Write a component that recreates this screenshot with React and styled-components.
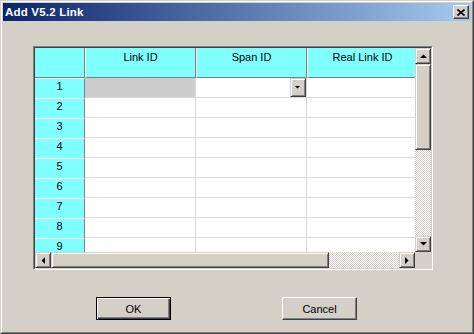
import styled, { createGlobalStyle } from 'styled-components';

const GlobalStyle = createGlobalStyle`
  html, body {
    margin: 0;
    padding: 0;
    background: #d4d0c8;
  }
  * {
    box-sizing: border-box;
  }
`;

const face = '#d4d0c8';
const shadow = '#808080';
const dark = '#404040';

const Window = styled.div`
  width: 474px;
  height: 334px;
  border: 1px solid;
  border-color: ${face} ${dark} ${dark} ${face};
  background: ${face};
  font-family: "Liberation Sans", "DejaVu Sans", sans-serif;
  font-size: 11px;
  color: #000;
`;

const Frame = styled.div`
  height: 100%;
  border: 1px solid;
  border-color: #fff ${shadow} ${shadow} #fff;
  padding: 1px;
  display: flex;
  flex-direction: column;
`;

const TitleBar = styled.div`
  height: 18px;
  display: flex;
  align-items: center;
  justify-content: space-between;
  padding: 0 2px 0 2px;
  background: linear-gradient(to right, #0a246a, #a6caf0);
`;

const Title = styled.span`
  color: #fff;
  font-weight: bold;
  font-size: 11.5px;
  letter-spacing: 0.2px;
`;

const CloseButton = styled.div`
  width: 16px;
  height: 14px;
  background: ${face};
  border: 1px solid;
  border-color: #fff ${dark} ${dark} #fff;
  box-shadow: inset -1px -1px ${shadow};
  display: flex;
  align-items: center;
  justify-content: center;
`;

const Body = styled.div`
  flex: 1;
  display: flex;
  flex-direction: column;
  padding: 25px 0 0 30px;
`;

const GridFrame = styled.div`
  width: 400px;
  height: 224px;
  border: 1px solid;
  border-color: ${shadow} #fff #fff ${shadow};
`;

const GridInner = styled.div`
  height: 100%;
  border: 1px solid;
  border-color: ${dark} ${face} ${face} ${dark};
  display: flex;
  flex-direction: column;
`;

const GridTop = styled.div`
  display: flex;
  height: 204px;
`;

const GridBottom = styled.div`
  display: flex;
  height: 16px;
`;

const Cells = styled.div`
  width: 380px;
  height: 204px;
  overflow: hidden;
  display: grid;
  grid-template-columns: 50px 111px 111px 111px;
  grid-template-rows: 30px;
  grid-auto-rows: 20px;
  background: #fff;
`;

const HeadCell = styled.div`
  background: #80ffff;
  border-left: ${(p) => (p.$corner ? 'none' : '1px solid #fff')};
  border-right: 1px solid ${shadow};
  border-bottom: 1px solid ${shadow};
  text-align: center;
  padding-top: 3px;
  white-space: nowrap;
`;

const RowHead = styled.div`
  background: #80ffff;
  border-top: 1px solid #fff;
  border-right: 1px solid ${shadow};
  text-align: center;
  line-height: 13px;
  padding-top: 1px;
`;

const DataCell = styled.div`
  background: ${(p) => (p.$selected ? '#cccccc' : '#fff')};
  border-right: 1px solid #dadada;
  border-bottom: 1px solid #dadada;
  display: flex;
  justify-content: flex-end;
`;

const Bevel = styled.div`
  background: ${face};
  border: 1px solid;
  border-color: ${face} ${dark} ${dark} ${face};
  box-shadow: inset 1px 1px #fff, inset -1px -1px ${shadow};
  display: flex;
  align-items: center;
  justify-content: center;
`;

const ScrollButton = styled(Bevel)`
  width: 16px;
  height: 16px;
  flex: none;
`;

const DropButton = styled(Bevel)`
  width: 16px;
  height: 19px;
`;

const Thumb = styled(Bevel)`
  flex: none;
  width: ${(p) => (p.$vertical ? '16px' : `${p.$size}px`)};
  height: ${(p) => (p.$vertical ? `${p.$size}px` : '16px')};
`;

const Track = styled.div`
  flex: 1;
  background: repeating-conic-gradient(${face} 0% 25%, #ffffff 0% 50%) 0 0 / 2px 2px;
`;

const VScroll = styled.div`
  width: 16px;
  display: flex;
  flex-direction: column;
`;

const HScroll = styled.div`
  width: 380px;
  display: flex;
`;

const Corner = styled.div`
  width: 16px;
  background: ${face};
`;

const ButtonRow = styled.div`
  display: flex;
  gap: 111px;
  margin: 27px 0 0 63px;
`;

const PushButton = styled.div`
  width: 75px;
  height: 23px;
  background: ${face};
  border: 1px solid;
  border-color: ${(p) => (p.$default ? '#000' : `#fff ${dark} ${dark} #fff`)};
  box-shadow: ${(p) =>
    p.$default
      ? `inset 1px 1px #fff, inset -1px -1px ${dark}, inset -2px -2px ${shadow}`
      : `inset -1px -1px ${shadow}`};
  display: flex;
  align-items: center;
  justify-content: center;
  padding-top: 1px;
`;

const arrows = {
  up: '0,4 7,4 3.5,0.5',
  down: '0,0 7,0 3.5,3.5',
  left: '4,0 4,7 0.5,3.5',
  right: '0,0 0,7 3.5,3.5',
};

const Arrow = ({ dir, small }) => {
  const horiz = dir === 'left' || dir === 'right';
  const w = horiz ? 4 : 7;
  const h = horiz ? 7 : 4;
  const s = small ? 0.72 : 1;
  return (
    <svg width={w * s} height={h * s} viewBox={`0 0 ${w} ${h}`} style={{ display: 'block' }}>
      <polygon points={arrows[dir]} fill="#000" />
    </svg>
  );
};

const CloseGlyph = () => (
  <svg width="8" height="7" viewBox="0 0 8 7" style={{ display: 'block' }}>
    <path d="M0.5 0.5 L7.5 6.5 M7.5 0.5 L0.5 6.5" stroke="#000" strokeWidth="1.6" />
  </svg>
);

const columns = ['Link ID', 'Span ID', 'Real Link ID'];
const rows = [1, 2, 3, 4, 5, 6, 7, 8, 9];

const App = () => {
  return (
    <>
      <GlobalStyle />
      <Window>
        <Frame>
          <TitleBar>
            <Title>Add V5.2 Link</Title>
            <CloseButton>
              <CloseGlyph />
            </CloseButton>
          </TitleBar>
          <Body>
            <GridFrame>
              <GridInner>
                <GridTop>
                  <Cells>
                    <HeadCell $corner />
                    {columns.map((c) => (
                      <HeadCell key={c}>{c}</HeadCell>
                    ))}
                    {rows.map((r) => [
                      <RowHead key={`h${r}`}>{r}</RowHead>,
                      <DataCell key={`a${r}`} $selected={r === 1} />,
                      <DataCell key={`b${r}`}>
                        {r === 1 && (
                          <DropButton>
                            <Arrow dir="down" small />
                          </DropButton>
                        )}
                      </DataCell>,
                      <DataCell key={`c${r}`} />,
                    ])}
                  </Cells>
                  <VScroll>
                    <ScrollButton>
                      <Arrow dir="up" />
                    </ScrollButton>
                    <Thumb $vertical $size={86} />
                    <Track />
                    <ScrollButton>
                      <Arrow dir="down" />
                    </ScrollButton>
                  </VScroll>
                </GridTop>
                <GridBottom>
                  <HScroll>
                    <ScrollButton>
                      <Arrow dir="left" />
                    </ScrollButton>
                    <Thumb $size={278} />
                    <Track />
                    <ScrollButton>
                      <Arrow dir="right" />
                    </ScrollButton>
                  </HScroll>
                  <Corner />
                </GridBottom>
              </GridInner>
            </GridFrame>
            <ButtonRow>
              <PushButton $default>OK</PushButton>
              <PushButton>Cancel</PushButton>
            </ButtonRow>
          </Body>
        </Frame>
      </Window>
    </>
  );
};

export default App;
